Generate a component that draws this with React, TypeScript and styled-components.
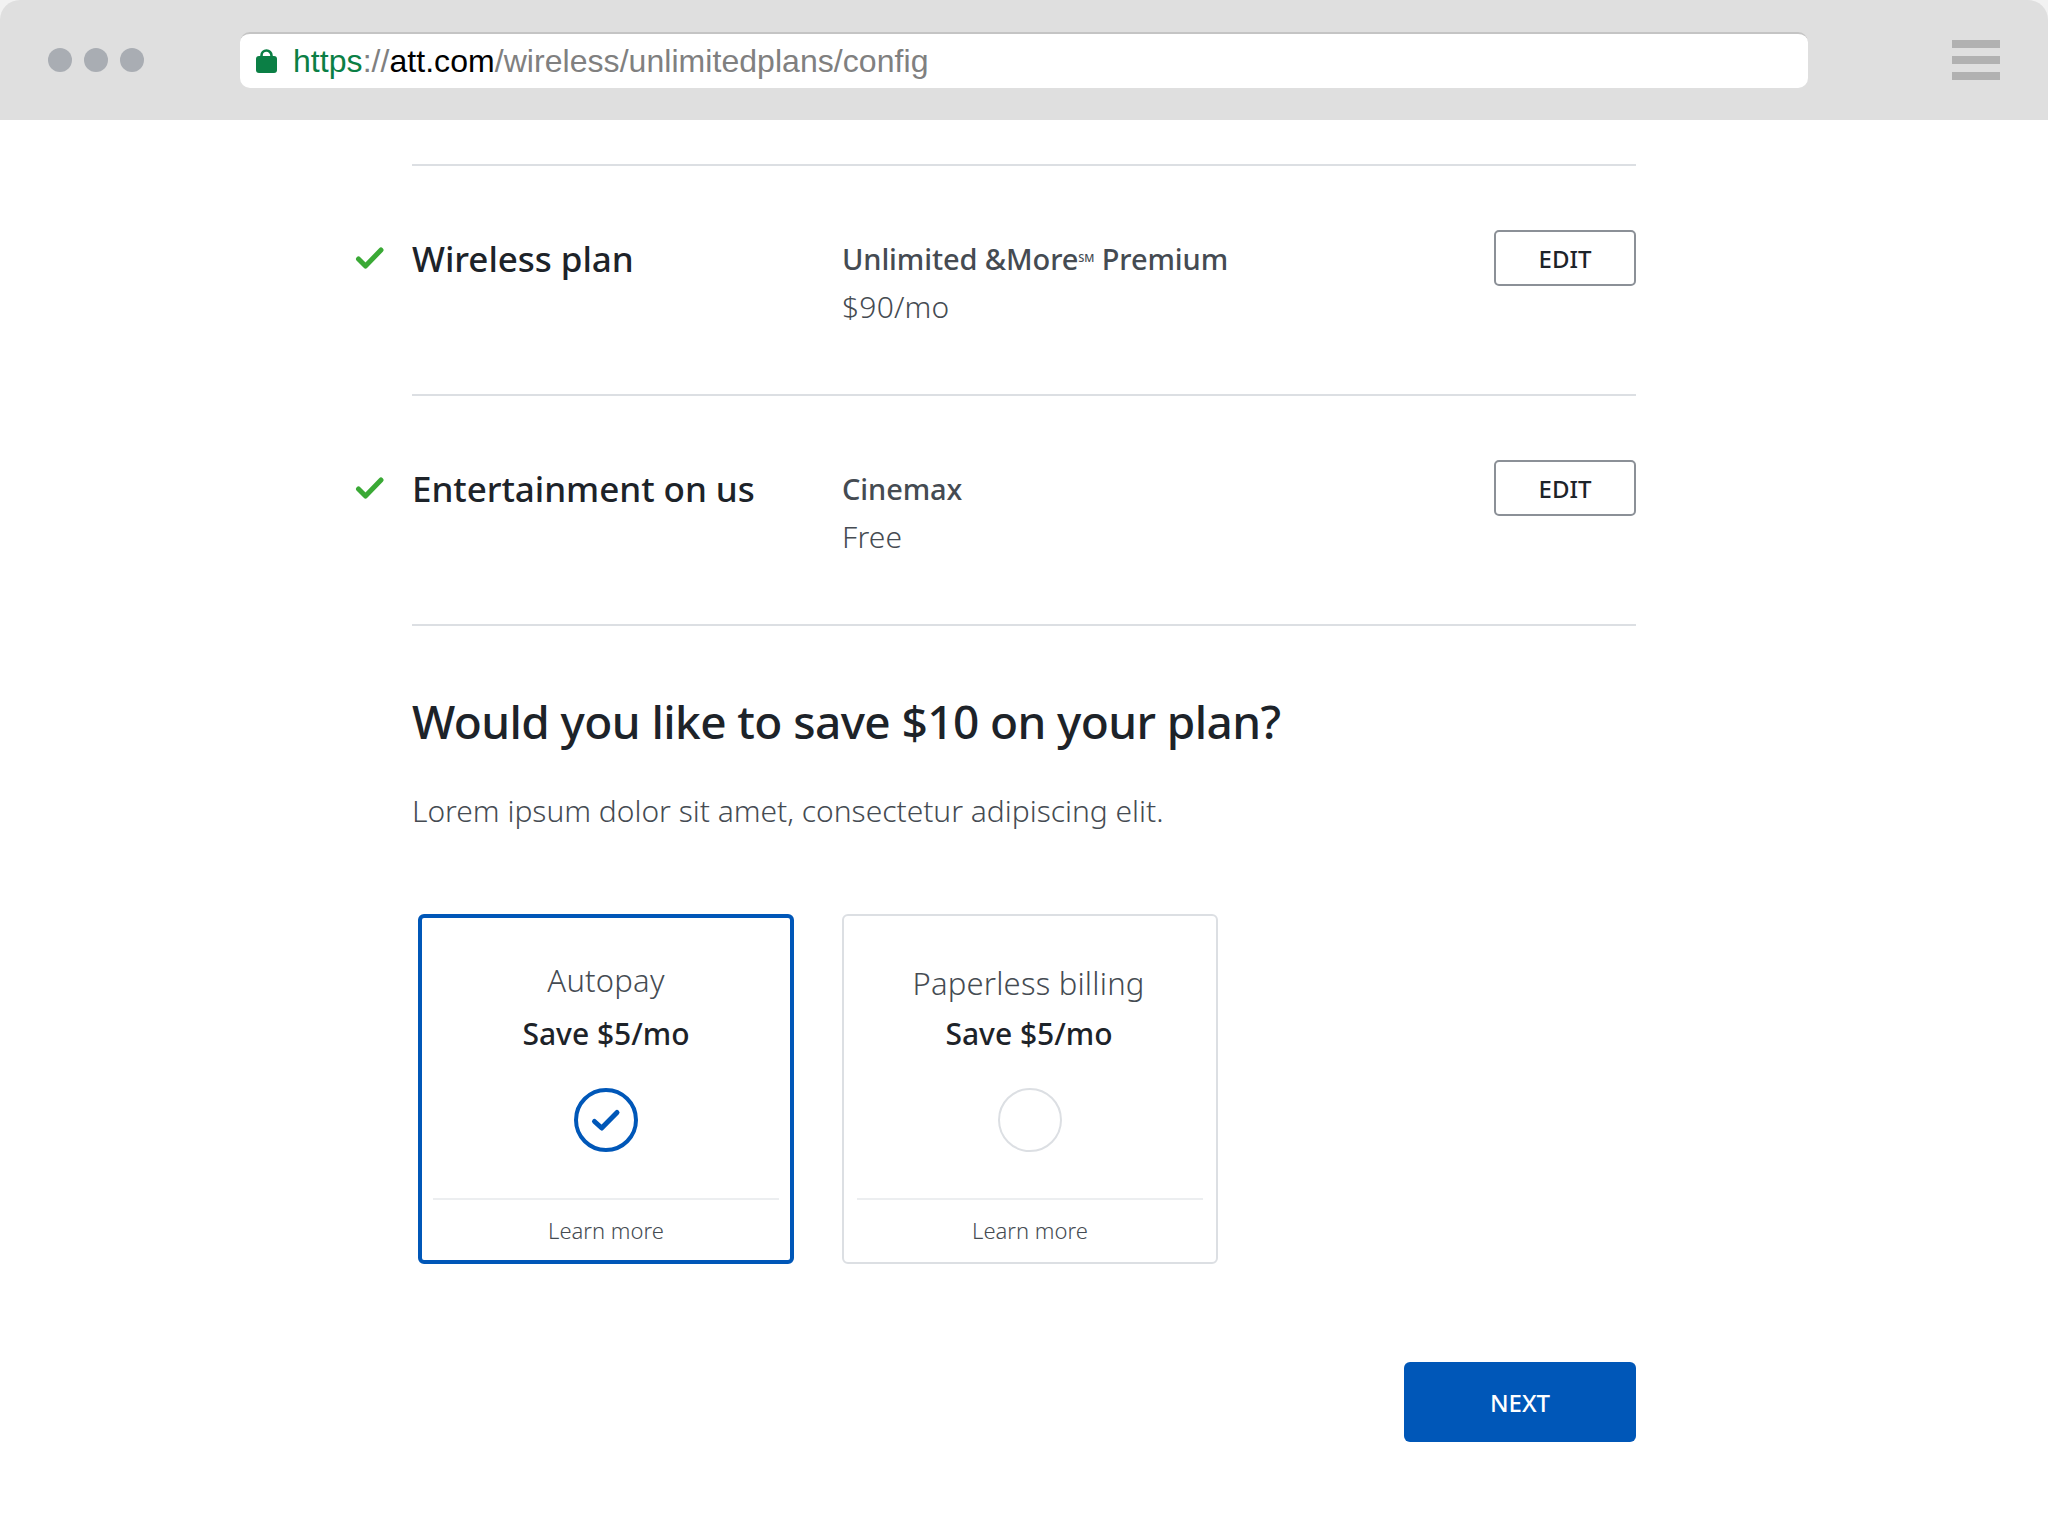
import React from "react";
import styled, { createGlobalStyle } from "styled-components";

const Global = createGlobalStyle`
  html, body { margin: 0; padding: 0; background: #fff; }
  body { font-family: "Noto Sans", "Open Sans", sans-serif; color: #1d2329; }
  * { box-sizing: border-box; }
`;

const Page = styled.div`
  width: 2048px;
  height: 1536px;
  overflow: hidden;
  background: #fff;
`;

const Chrome = styled.header`
  height: 120px;
  background: #f2f2f2;
`;

const ChromeInner = styled.div`
  height: 120px;
  padding: 0 48px;
  background: #dfdfdf;
  border-radius: 20px 20px 0 0;
  display: flex;
  align-items: center;
`;

const Dots = styled.div`
  display: flex;
  gap: 12px;
  width: 192px;
  flex: none;
`;

const Dot = styled.span`
  width: 24px;
  height: 24px;
  border-radius: 50%;
  background: #a9adb3;
`;

const UrlBar = styled.div`
  width: 1568px;
  height: 56px;
  flex: none;
  background: #fff;
  border-top: 2px solid #c4c4c4;
  border-radius: 10px;
  padding: 0 0 0 16px;
  display: flex;
  align-items: center;
  gap: 16px;
  font-family: "Liberation Sans", Arial, sans-serif;
  font-size: 32px;
  letter-spacing: 0.05px;
  color: #808080;
  white-space: nowrap;
`;

const UrlSecure = styled.span`
  color: #0b7f45;
`;

const UrlHost = styled.span`
  color: #000;
`;

const Menu = styled.div`
  margin-left: 144px;
  display: flex;
  flex-direction: column;
  gap: 8px;
`;

const MenuBar = styled.span`
  display: block;
  width: 48px;
  height: 8px;
  background: #b1b1b1;
`;

const Main = styled.main`
  width: 1636px;
  padding: 44px 0 0 356px;
`;

const Rule = styled.hr`
  margin: 0 0 0 56px;
  border: 0;
  height: 2px;
  background: #dcdfe3;
`;

const SummaryRow = styled.section`
  height: 228px;
  padding-top: 64px;
  display: grid;
  grid-template-columns: 56px 430px 1fr 142px;
  align-items: start;
`;

const CheckIcon = styled.svg`
  width: 30px;
  height: 26px;
  margin: 14px 0 0 -1px;
`;

const RowTitle = styled.h2`
  margin: 4px 0 0;
  font-size: 35px;
  line-height: 50px;
  font-weight: 500;
  letter-spacing: -0.05px;
  color: #1d2329;
`;

const RowValue = styled.div`
  margin-top: 5px;
  font-size: 29px;
  line-height: 48px;
  color: #454b52;
`;

const RowValueStrong = styled.div`
  font-weight: 500;
  letter-spacing: -0.1px;
`;

const RowPrice = styled.div`
  font-size: 30px;
  font-weight: 300;
  letter-spacing: 0.2px;
`;

const Mark = styled.sup`
  font-size: 11px;
  line-height: 0;
  vertical-align: 8px;
`;

const EditButton = styled.button`
  height: 56px;
  background: #fff;
  border: 2px solid #8b9097;
  border-radius: 5px;
  font-family: inherit;
  font-size: 24px;
  font-weight: 500;
  color: #1d2329;
  padding: 0;
`;

const Savings = styled.section`
  margin-left: 56px;
  padding-top: 63px;
`;

const Heading = styled.h1`
  margin: 0;
  font-size: 46px;
  line-height: 64px;
  font-weight: 500;
  letter-spacing: -0.6px;
  color: #1d2329;
`;

const Lead = styled.p`
  margin: 36px 0 0;
  font-size: 30px;
  line-height: 44px;
  font-weight: 300;
  letter-spacing: -0.02px;
  color: #454b52;
`;

const Cards = styled.div`
  margin: 81px 0 0 6px;
  display: flex;
  gap: 48px;
`;

const Card = styled.article<{ $selected?: boolean }>`
  width: 376px;
  height: 350px;
  background: #fff;
  border: ${(p) => (p.$selected ? "4px solid #0057b8" : "2px solid #dcdfe3")};
  border-radius: 6px;
  padding: ${(p) => (p.$selected ? "40px 11px 0" : "43px 13px 0")};
  display: flex;
  flex-direction: column;
  align-items: center;
  text-align: center;
`;

const CardTitle = styled.div<{ $low?: boolean }>`
  font-size: 31px;
  line-height: 44px;
  font-weight: 300;
  letter-spacing: 0.2px;
  margin-top: ${(p) => (p.$low ? "2px" : "0")};
  margin-right: ${(p) => (p.$low ? "3px" : "0")};
  margin-bottom: ${(p) => (p.$low ? "7px" : "10px")};
  color: #454b52;
`;

const CardSave = styled.div<{ $shift?: boolean }>`
  font-size: 30px;
  line-height: 44px;
  font-weight: 500;
  margin-right: ${(p) => (p.$shift ? "2px" : "0")};
  color: #1d2329;
`;

const Radio = styled.div<{ $selected?: boolean }>`
  width: 64px;
  height: 64px;
  margin-top: 32px;
  border-radius: 50%;
  border: ${(p) => (p.$selected ? "4px solid #0057b8" : "2px solid #dcdfe3")};
  display: flex;
  align-items: center;
  justify-content: center;
`;

const RadioCheck = styled.svg`
  width: 32px;
  height: 26px;
`;

const CardRule = styled.div`
  width: 100%;
  height: 2px;
  margin-top: 46px;
  background: #eceef0;
`;

const LearnMore = styled.div`
  font-size: 22px;
  line-height: 30px;
  font-weight: 300;
  margin-top: 15px;
  color: #454b52;
`;

const Actions = styled.div`
  margin-top: 98px;
  display: flex;
  justify-content: flex-end;
`;

const NextButton = styled.button`
  width: 232px;
  height: 80px;
  background: #0057b8;
  border: 0;
  border-radius: 6px;
  font-family: inherit;
  font-size: 24px;
  font-weight: 500;
  color: #fff;
  padding: 0;
`;

const Lock = () => (
  <svg width="21" height="24" viewBox="0 0 21 24" style={{ flex: "none" }}>
    <path d="M5.5 9V6.5a5 5 0 0 1 10 0V9" fill="none" stroke="#0b7f45" strokeWidth="2.6" />
    <rect x="0" y="7" width="21" height="17" rx="3" fill="#0b7f45" />
  </svg>
);

const GreenCheck = () => (
  <CheckIcon viewBox="0 0 30 26">
    <path
      d="M3.5 15 L10.5 22 L26 6"
      fill="none"
      stroke="#3aa935"
      strokeWidth="5"
      strokeLinecap="round"
      strokeLinejoin="round"
    />
  </CheckIcon>
);

const rows = [
  { title: "Wireless plan", name: <>Unlimited &amp;More<Mark>SM</Mark> Premium</>, price: "$90/mo" },
  { title: "Entertainment on us", name: "Cinemax", price: "Free" },
];

export default function App() {
  return (
    <Page>
      <Global />
      <Chrome>
        <ChromeInner>
          <Dots>
            <Dot />
            <Dot />
            <Dot />
          </Dots>
          <UrlBar>
            <Lock />
            <span>
              <UrlSecure>https</UrlSecure>://<UrlHost>att.com</UrlHost>/wireless/unlimitedplans/config
            </span>
          </UrlBar>
          <Menu>
            <MenuBar />
            <MenuBar />
            <MenuBar />
          </Menu>
        </ChromeInner>
      </Chrome>
      <Main>
        <Rule />
        {rows.map((r) => (
          <React.Fragment key={r.title}>
            <SummaryRow>
              <GreenCheck />
              <RowTitle>{r.title}</RowTitle>
              <RowValue>
                <RowValueStrong>{r.name}</RowValueStrong>
                <RowPrice>{r.price}</RowPrice>
              </RowValue>
              <EditButton>EDIT</EditButton>
            </SummaryRow>
            <Rule />
          </React.Fragment>
        ))}
        <Savings>
          <Heading>Would you like to save $10 on your plan?</Heading>
          <Lead>Lorem ipsum dolor sit amet, consectetur adipiscing elit.</Lead>
          <Cards>
            <Card $selected>
              <CardTitle>Autopay</CardTitle>
              <CardSave>Save $5/mo</CardSave>
              <Radio $selected>
                <RadioCheck viewBox="0 0 32 26">
                  <path
                    d="M4.5 14.5 L11.7 21 L27 5.5"
                    fill="none"
                    stroke="#0057b8"
                    strokeWidth="5"
                    strokeLinecap="round"
                    strokeLinejoin="round"
                  />
                </RadioCheck>
              </Radio>
              <CardRule />
              <LearnMore>Learn more</LearnMore>
            </Card>
            <Card>
              <CardTitle $low>Paperless billing</CardTitle>
              <CardSave $shift>Save $5/mo</CardSave>
              <Radio />
              <CardRule />
              <LearnMore>Learn more</LearnMore>
            </Card>
          </Cards>
          <Actions>
            <NextButton>NEXT</NextButton>
          </Actions>
        </Savings>
      </Main>
    </Page>
  );
}
